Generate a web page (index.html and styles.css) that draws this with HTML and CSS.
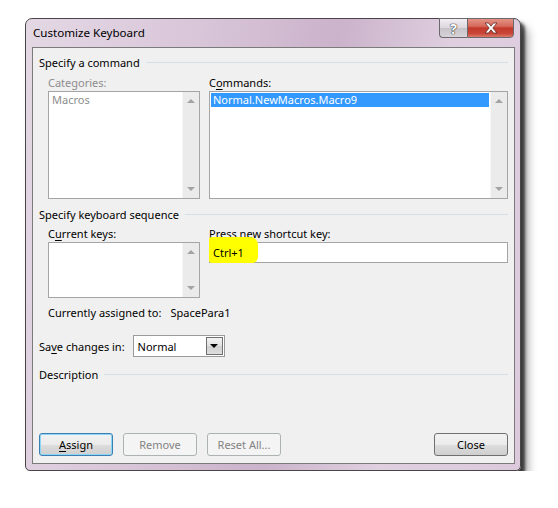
FILE: index.html
```html
<!DOCTYPE html>
<html>
<head>
<meta charset="utf-8">
<link rel="stylesheet" href="styles.css">
</head>
<body>
<div class="window">
  <div class="titlebar">
    <span class="title">Customize Keyboard</span>
    <div class="caption">
      <div class="cap help">?</div>
      <div class="cap close">
        <svg width="16" height="12" viewBox="0 0 16 12"><path d="M2 1h3.5L8 4.2 10.5 1H14L9.8 6 14 11h-3.5L8 7.8 5.5 11H2l4.2-5z" fill="#fff" stroke="#5a2a25" stroke-width="0.8"/></svg>
      </div>
    </div>
  </div>
  <div class="client">
    <div class="group-head"><span>Specify a command</span><i class="rule"></i></div>
    <div class="cols first">
      <div class="col left">
        <div class="lbl disabled">Categories:</div>
        <div class="listbox tall">
          <div class="items"><div class="item disabled">Macros</div></div>
          <div class="sb"><span class="arr up"></span><span class="arr down"></span></div>
        </div>
      </div>
      <div class="col right">
        <div class="lbl">C<u>o</u>mmands:</div>
        <div class="listbox tall">
          <div class="items"><div class="item sel">Normal.NewMacros.Macro9</div></div>
          <div class="sb"><span class="arr up"></span><span class="arr down"></span></div>
        </div>
      </div>
    </div>

    <div class="group-head seq"><span>Specify keyboard sequence</span><i class="rule"></i></div>
    <div class="cols second">
      <div class="col left">
        <div class="lbl">C<u>u</u>rrent keys:</div>
        <div class="listbox short">
          <div class="items"></div>
          <div class="sb"><span class="arr up"></span><span class="arr down"></span></div>
        </div>
      </div>
      <div class="col right">
        <div class="lbl">Press <u>n</u>ew shortcut key:</div>
        <div class="input"><span class="hl"></span><span class="keytext">Ctrl+1</span></div>
      </div>
    </div>

    <div class="assigned"><span>Currently assigned to:</span><span class="assigned-val">SpacePara1</span></div>

    <div class="save-row">
      <span>Sa<u>v</u>e changes in:</span>
      <div class="combo"><span class="combo-text">Normal</span><span class="combo-btn"><span class="combo-arr"></span></span></div>
    </div>

    <div class="group-head desc"><span>Description</span><i class="rule"></i></div>

    <div class="spacer"></div>

    <div class="buttons">
      <div class="btn default"><u>A</u>ssign</div>
      <div class="btn dis">Remove</div>
      <div class="btn dis">Reset All...</div>
      <div class="grow"></div>
      <div class="btn">Close</div>
    </div>
  </div>
</div>
</body>
</html>
```

FILE: styles.css
```css
* { box-sizing: border-box; }
html, body { margin: 0; padding: 0; background: #fff; }
body {
  padding: 18px 0 0 25px;
  font-family: "Noto Sans", "Open Sans", sans-serif;
  font-size: 11px;
  color: #000;
}
u { text-decoration: underline; text-underline-offset: 2px; }

.window {
  width: 496px;
  height: 453px;
  border: 1px solid #4a454a;
  border-radius: 7px 7px 5px 5px;
  background: linear-gradient(100deg, #e4d8e4 0%, #d9c6d9 30%, #cbb3cb 55%, #dfcfdf 75%, #dccadc 100%);
  box-shadow: 4px 4px 3px rgba(0,0,0,0.65), 7px 9px 10px rgba(0,0,0,0.35);
  display: flex;
  flex-direction: column;
}

.titlebar {
  height: 28px;
  display: flex;
  align-items: flex-start;
  justify-content: space-between;
  flex-shrink: 0;
}
.title {
  margin: 6px 0 0 7px;
  line-height: 16px;
  font-size: 11.6px;
}
.caption {
  display: flex;
  margin-right: 6px;
  margin-top: -1px;
}
.cap {
  height: 20px;
  border: 1px solid #6d6a6d;
  display: flex;
  align-items: center;
  justify-content: center;
}
.help {
  width: 28px;
  border-radius: 0 0 0 4px;
  border-right: none;
  background: linear-gradient(#f2eef2, #dcd6dc 50%, #c7c2c7 51%, #d8d3d8);
  color: #fff;
  font-weight: bold;
  font-size: 14px;
  text-shadow: 0 0 1px #333, 0 0 1px #333, 0 0 1px #333;
}
.close {
  width: 47px;
  border-radius: 0 0 4px 0;
  background: linear-gradient(#e29385, #d66a5b 40%, #c3392c 50%, #c94537 80%, #db7a6a);
}

.client {
  flex: 1;
  margin: 0 5px 6px 6px;
  border: 1px solid #7b7b7b;
  background: #f0f0f0;
  display: flex;
  flex-direction: column;
  padding: 7px 6px 7px 6px;
}

.group-head {
  display: flex;
  align-items: center;
  line-height: 15px;
}
.group-head .rule {
  flex: 1;
  height: 1px;
  background: #d5dfe5;
  margin-left: 6px;
}
.group-head.seq { margin-top: 8px; }
.group-head.desc { margin-top: 10px; }

.cols {
  display: flex;
  gap: 9px;
  padding-left: 9px;
}
.cols.first { margin-top: 5px; }
.cols.second { margin-top: 4px; }
.col { display: flex; flex-direction: column; }
.col.left { width: 152px; }
.col.right { flex: 1; }
.lbl { line-height: 15px; margin-bottom: 1px; }
.disabled { color: #8d8d8d; }

.listbox {
  border: 1px solid #a5a5a5;
  background: #fff;
  display: flex;
}
.listbox.tall { height: 108px; }
.listbox.short { height: 56px; }
.items { flex: 1; padding: 1px; }
.item { line-height: 14px; padding-left: 2px; }
.item.sel { background: #3399ff; color: #fff; }

.sb {
  width: 17px;
  background: #ebebeb;
  border-left: 1px solid #f6f6f6;
  display: flex;
  flex-direction: column;
  justify-content: space-between;
  align-items: center;
  padding: 7px 0 7px;
}
.arr { width: 0; height: 0; border-left: 4px solid transparent; border-right: 4px solid transparent; }
.arr.up { border-bottom: 4px solid #a3a3a3; }
.arr.down { border-top: 4px solid #a3a3a3; }

.input {
  height: 21px;
  border: 1px solid #a5a5a5;
  background: #fff;
  position: relative;
  display: flex;
  align-items: center;
  padding-left: 3px;
}
.hl {
  position: absolute;
  left: -1px;
  top: -6px;
  width: 49px;
  height: 26px;
  background: #ffff00;
  border-radius: 3px 8px 6px 3px;
}
.keytext { position: relative; line-height: 15px; }

.assigned {
  margin: 7px 0 0 9px;
  line-height: 15px;
  display: flex;
}
.assigned-val { margin-left: 9px; }

.save-row {
  margin-top: 15px;
  display: flex;
  align-items: center;
  gap: 8px;
}
.combo {
  width: 92px;
  height: 22px;
  border: 1px solid #9a9a9a;
  background: #fff;
  display: flex;
  align-items: center;
  padding: 1px;
}
.combo-text { flex: 1; padding-left: 3px; line-height: 15px; }
.combo-btn {
  width: 17px;
  height: 18px;
  border: 1px solid #707070;
  background: linear-gradient(#f2f2f2, #e0e0e0 50%, #cfcfcf 51%, #dedede);
  display: flex;
  align-items: center;
  justify-content: center;
}
.combo-arr { width: 0; height: 0; border-left: 4px solid transparent; border-right: 4px solid transparent; border-top: 4px solid #000; }

.spacer { flex: 1; }

.buttons {
  display: flex;
  gap: 10px;
  margin-bottom: 0;
}
.grow { flex: 1; }
.btn {
  width: 74px;
  height: 23px;
  border: 1px solid #707070;
  border-radius: 3px;
  background: linear-gradient(#f2f2f2, #ebebeb 50%, #dddddd 51%, #cfcfcf);
  display: flex;
  align-items: center;
  justify-content: center;
  line-height: 15px;
}
.btn.default {
  border-color: #3c7fb1;
  box-shadow: inset 0 0 0 1px #8ed5f7;
}
.btn.dis {
  border-color: #adb2b5;
  background: #f4f4f4;
  color: #838383;
}
```
